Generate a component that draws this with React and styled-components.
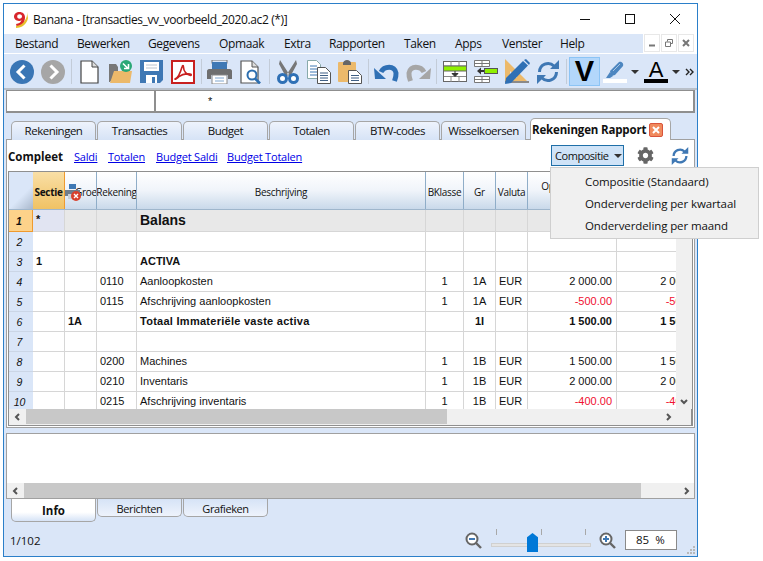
import React from "react";
import styled, { createGlobalStyle } from "styled-components";
import { FaCog } from "react-icons/fa";

const UI_FONT = `"Open Sans", "Noto Sans", sans-serif`;
const CELL_FONT = `"Liberation Sans", Arial, sans-serif`;
const COLUMNS = "24px 32px 32px 40px 289px 38px 32px 32px 89px 91px";

const GlobalStyle = createGlobalStyle`
  html, body {
    margin: 0;
    background: #fff;
    font-family: ${UI_FONT};
    color: #111;
  }
`;

const Page = styled.div`
  width: 763px;
  height: 561px;
  padding: 3px;
  box-sizing: border-box;
  overflow: hidden;
`;

const Window = styled.div`
  position: relative;
  width: 695px;
  height: 554px;
  box-sizing: border-box;
  border: 1px solid #2b7fc9;
  background: #dae6f8;
  display: flex;
  flex-direction: column;
`;

const TitleBar = styled.div`
  height: 30px;
  flex: none;
  background: #fff;
  display: flex;
  align-items: center;
  padding-left: 9px;
  font-size: 12px;
`;

const TitleText = styled.span`
  margin-left: 5px;
  flex: 1;
  letter-spacing: -0.38px;
`;

const WinControls = styled.div`
  display: flex;
  align-items: center;
  margin-right: 17px;
  gap: 35px;
`;

const MenuBar = styled.div`
  height: 20px;
  flex: none;
  display: flex;
  background: #fff;
  box-sizing: border-box;
  border-bottom: 1px solid #fff;
`;

const MenuItems = styled.div`
  width: 639px;
  background: #dae6f8;
  display: flex;
  align-items: center;
  padding-left: 11px;
  box-sizing: border-box;
  font-size: 12px;
  letter-spacing: -0.38px;
`;

const MenuItem = styled.span`
  width: ${(p) => p.$w}px;
  flex: none;
`;

const MdiButtons = styled.div`
  display: flex;
  gap: 1px;
  padding-left: 1px;
`;

const MdiButton = styled.div`
  width: 16px;
  height: 18px;
  border: 1px solid #e8e8e8;
  box-sizing: border-box;
  background: #fff;
  display: flex;
  align-items: center;
  justify-content: center;
`;

const Toolbar = styled.div`
  height: 35px;
  flex: none;
  box-sizing: border-box;
  display: flex;
  align-items: center;
  padding: 0 0 0 2px;
  border-bottom: 2px solid #b9c0c9;
  margin-top: 1px;
`;

const ToolButton = styled.div`
  width: 31px;
  height: 29px;
  flex: none;
  display: flex;
  align-items: center;
  justify-content: center;
`;

const ToolSep = styled.div`
  width: 6px;
  height: 25px;
  flex: none;
  display: flex;
  justify-content: center;
  &::before {
    content: "";
    width: 1px;
    background: #c3ccd8;
  }
`;

const ActiveToolButton = styled(ToolButton)`
  box-sizing: border-box;
  border: 1px solid #8cc4f5;
  background: #b3d7fb;
  font: bold 29px/1 ${CELL_FONT};
  color: #000;
`;

const SplitTool = styled.div`
  width: 41px;
  flex: none;
  display: flex;
  align-items: center;
  padding-left: 3px;
  box-sizing: border-box;
`;

const Caret = styled.span`
  width: 0;
  height: 0;
  margin-left: ${(p) => p.$gap ?? 4}px;
  border-left: 4px solid transparent;
  border-right: 4px solid transparent;
  border-top: 4px solid #333;
`;

const Swatch = styled.div`
  width: 24px;
  display: flex;
  flex-direction: column;
  align-items: center;
  line-height: 1;
`;

const SwatchBar = styled.div`
  width: 24px;
  height: 4px;
  background: ${(p) => p.$color};
`;

const LetterA = styled.span`
  font: 22px/19px ${CELL_FONT};
  color: #000;
`;

const MoreSlot = styled.div`
  margin-left: 3px;
  display: flex;
`;

const FormulaBar = styled.div`
  height: 23px;
  flex: none;
  margin: 0 0 0 2px;
  width: 689px;
  box-sizing: border-box;
  border: 1px solid #8f8f8f;
  border-width: 1px 2px 2px 1px;
  background: #fff;
  display: flex;
  font: 11px/20px ${CELL_FONT};
`;

const FormulaCell = styled.div`
  width: 147px;
  border-right: 2px solid #8f8f8f;
`;

const FormulaValue = styled.div`
  padding-left: 52px;
`;

const TabStrip = styled.div`
  flex: none;
  height: 27px;
  display: flex;
  align-items: flex-end;
  padding-left: 7px;
  gap: 1px;
  position: relative;
  z-index: 2;
  margin-bottom: -1px;
`;

const Tab = styled.div`
  width: 85px;
  height: 19px;
  box-sizing: border-box;
  border: 1px solid #a6a6a6;
  border-bottom: none;
  border-radius: 5px 5px 0 0;
  background: linear-gradient(#eef3fc, #d6e3f6);
  text-align: center;
  font-size: 11.5px;
  letter-spacing: -0.5px;
  line-height: 18px;
`;

const ActiveTab = styled.div`
  width: 141px;
  height: 22px;
  margin-left: 3px;
  box-sizing: border-box;
  border: 1px solid #a6a6a6;
  border-bottom: none;
  border-radius: 5px 5px 0 0;
  background: #fff;
  display: flex;
  align-items: center;
  padding-left: 1px;
  font-size: 11.5px;
  font-weight: 700;
  letter-spacing: -0.16px;
  gap: 3px;
  white-space: nowrap;
`;

const TabClose = styled.span`
  width: 14px;
  height: 14px;
  box-sizing: border-box;
  border: 1px solid #d9543b;
  border-radius: 2px;
  background: #f08a5d;
  color: #fff;
  display: flex;
  align-items: center;
  justify-content: center;
`;

const ReportPanel = styled.div`
  position: relative;
  height: 289px;
  width: 689px;
  flex: none;
  margin-left: 2px;
  box-sizing: border-box;
  border: 1px solid #a0a0a0;
  background: #fff;
  padding: 0 1px 1px;
  display: flex;
  flex-direction: column;
`;

const LinkRow = styled.div`
  height: 31px;
  flex: none;
  display: flex;
  align-items: center;
  font-size: 11px;
  position: relative;
`;

const Current = styled.span`
  font-weight: 700;
  font-size: 11.5px;
  width: 66px;
  padding-top: 1px;
`;

const ReportLink = styled.a`
  color: #0000e6;
  text-decoration: underline;
  width: ${(p) => p.$w}px;
  padding-top: 1px;
  letter-spacing: -0.2px;
`;

const LinkTools = styled.div`
  margin-left: auto;
  display: flex;
  align-items: center;
  padding-right: 4px;
`;

const CompositeButton = styled.div`
  width: 73px;
  height: 21px;
  box-sizing: border-box;
  border: 1px solid #1f6fa8;
  background: #cfe3f7;
  display: flex;
  align-items: center;
  padding-left: 3px;
  font-size: 11px;
  letter-spacing: -0.45px;
  margin-right: 13px;
`;

const GearSlot = styled.div`
  width: 34px;
  display: flex;
  color: #666;
`;

const Menu = styled.div`
  position: absolute;
  left: 543px;
  top: 27px;
  width: 209px;
  height: 72px;
  box-sizing: border-box;
  border: 1px solid #cfcfcf;
  background: #f0f0f0;
  z-index: 5;
  padding-top: 3px;
`;

const MenuOption = styled.div`
  height: 22px;
  padding-left: 34px;
  font-size: 11.5px;
  letter-spacing: -0.1px;
  line-height: 21px;
  white-space: nowrap;
`;

const GridFrame = styled.div`
  flex: 1;
  min-height: 0;
  border: 1px solid #8f8f8f;
  border-right-width: 2px;
  background: #f0f0f0;
  display: flex;
  flex-direction: column;
`;

const GridBody = styled.div`
  display: flex;
  height: 237px;
  flex: none;
`;

const Sheet = styled.div`
  width: 667px;
  overflow: hidden;
  flex: none;
  background: #fff;
`;

const Row = styled.div`
  display: grid;
  grid-template-columns: ${COLUMNS};
  height: ${(p) => p.$h}px;
  width: max-content;
  background: ${(p) => p.$bg || "#fff"};
  font: 11px ${CELL_FONT};
`;

const HeaderRow = styled(Row)`
  background: linear-gradient(#fff, #f0f4fa 50%, #c9d9ea);
  border-bottom: 1px solid #9fb6cc;
  box-sizing: border-box;
`;

const Corner = styled.div`
  background: linear-gradient(135deg, #dae6f8 60%, #a9b8cc);
`;

const HeadCell = styled.div`
  display: flex;
  align-items: ${(p) => (p.$top ? "flex-start" : "center")};
  justify-content: center;
  padding-top: ${(p) => (p.$top ? "7px" : "3px")};
  border-right: 1px solid #8fadc8;
  font: ${(p) => (p.$selected ? "bold" : "normal")} 10px ${UI_FONT};
  letter-spacing: -0.3px;
  white-space: nowrap;
  overflow: hidden;
  box-sizing: border-box;
  background: ${(p) => (p.$selected ? "linear-gradient(#f9dfa6, #f0c264)" : "none")};
  border-color: ${(p) => (p.$selected ? "#ef9a2e" : "#8fadc8")};
`;

const GroupHead = styled(HeadCell)`
  justify-content: flex-start;
`;

const GroupHeadText = styled.span`
  margin-left: -6px;
`;

const RowNumber = styled.div`
  background: ${(p) => (p.$selected ? "#fdd28a" : "#dae6f8")};
  border-right: ${(p) => (p.$selected ? "1px solid #ef9a2e" : "none")};
  border-bottom: 1px solid ${(p) => (p.$selected ? "#ef9a2e" : "#cbd6e6")};
  box-sizing: border-box;
  display: flex;
  align-items: center;
  justify-content: center;
  padding-right: 3px;
  font: italic ${(p) => (p.$selected ? "bold" : "normal")} 10.5px ${CELL_FONT};
`;

const Cell = styled.div`
  border-right: 1px solid #d6d6d6;
  border-bottom: 1px solid #d6d6d6;
  box-sizing: border-box;
  padding: 0 ${(p) => (p.$right ? "4px" : "3px")};
  text-align: ${(p) => (p.$center ? "center" : p.$right ? "right" : "left")};
  font-weight: ${(p) => (p.$bold ? 700 : 400)};
  font-size: ${(p) => (p.$title ? "14px" : "11px")};
  letter-spacing: ${(p) => (p.$wide ? "0.27px" : "0")};
  color: ${(p) => (p.$red ? "#f01030" : "#111")};
  background: ${(p) => p.$bg || "transparent"};
  line-height: ${(p) => (p.$title ? "21px" : "19px")};
  white-space: nowrap;
  overflow: hidden;
`;

const VScroll = styled.div`
  width: 16px;
  flex: none;
  background: #f0f0f0;
  display: flex;
  flex-direction: column;
  justify-content: flex-end;
  align-items: center;
  padding-bottom: 4px;
  box-sizing: border-box;
`;

const HScroll = styled.div`
  height: 15px;
  flex: none;
  width: ${(p) => p.$w};
  background: #f0f0f0;
  display: flex;
  align-items: center;
`;

const ScrollEnd = styled.div`
  width: ${(p) => p.$w}px;
  flex: none;
  display: flex;
  justify-content: center;
`;

const ScrollThumb = styled.div`
  width: ${(p) => p.$w}px;
  flex: none;
  height: 100%;
  background: #c8c8c8;
`;

const ScrollRest = styled.div`
  flex: 1;
`;

const InfoPanel = styled.div`
  margin: 5px 0 0 2px;
  width: 689px;
  height: 66px;
  flex: none;
  box-sizing: border-box;
  border: 1px solid #a0a0a0;
  background: #fff;
  display: flex;
  flex-direction: column;
  justify-content: flex-end;
`;

const BottomTabs = styled.div`
  height: 23px;
  flex: none;
  display: flex;
  align-items: flex-start;
  padding-left: 7px;
  gap: 1px;
`;

const BottomTab = styled.div`
  width: 85px;
  height: 18px;
  box-sizing: border-box;
  border: 1px solid #a6a6a6;
  border-top: none;
  border-radius: 0 0 5px 5px;
  background: linear-gradient(#d6e3f6, #eef3fc);
  text-align: center;
  font-size: 11px;
  letter-spacing: -0.4px;
  line-height: 19px;
`;

const ActiveBottomTab = styled(BottomTab)`
  height: 23px;
  background: linear-gradient(#fff 60%, #d6e3f6);
  font-weight: 700;
  font-size: 11.5px;
  letter-spacing: 0;
  line-height: 23px;
`;

const StatusBar = styled.div`
  flex: 1;
  display: flex;
  align-items: center;
  padding: 2px 0 0 6px;
  font-size: 11.5px;
  position: relative;
`;

const Counter = styled.span`
  flex: 1;
`;

const Slider = styled.div`
  position: relative;
  width: 100px;
  height: 24px;
  margin: 0 8px 0 9px;
`;

const Ticks = styled.div`
  display: flex;
  justify-content: space-between;
  padding: 0 5px;
  height: 6px;
  margin-top: 1px;
`;

const Tick = styled.span`
  width: 1px;
  background: #a8a8a8;
`;

const Track = styled.div`
  height: 2px;
  margin-top: 8px;
  background: #e4e4e4;
  border: 1px solid #d0d0d0;
`;

const Thumb = styled.div`
  position: absolute;
  left: 36px;
  top: 5px;
  width: 11px;
  height: 19px;
  background: #0078d7;
  clip-path: polygon(50% 0, 100% 22%, 100% 100%, 0 100%, 0 22%);
`;

const ZoomValue = styled.div`
  width: 52px;
  height: 20px;
  margin: 0 20px 0 9px;
  box-sizing: border-box;
  border: 1px solid #8a8a8a;
  background: #fff;
  font-size: 11.5px;
  line-height: 18px;
  padding-left: 10px;
  white-space: pre;
`;

const Grip = styled.svg`
  position: absolute;
  right: 2px;
  bottom: 1px;
`;

const FlippableSvg = styled.svg`
  transform: ${(p) => (p.$flip ? "scaleX(-1)" : "none")};
`;

const PrinterSvg = styled.svg`
  position: relative;
  z-index: 1;
  flex: none;
`;

const Logo = () => (
  <svg width="15" height="17" viewBox="0 0 15 17">
    <path d="M3 17c6 0 11-4 12-10l-1-6c1 7-4 12-11 14z" fill="#e8c02c" />
    <path
      d="M6.5 1C3.4 1 1 3 1 5.6S3.2 10 6 10c1 0 2-.3 2.6-1-.6 2.2-2.6 3.6-5.6 3.9l.6 2c5-.4 8.4-3.6 8.4-8.4C12 3.2 9.8 1 6.5 1zm.1 2.3c1.5 0 2.4 1 2.4 2.2S8 7.7 6.5 7.7 4.2 6.8 4.2 5.5s1-2.2 2.4-2.2z"
      fill="#d8262c"
    />
  </svg>
);

const MinimizeIcon = () => (
  <svg width="10" height="10"><path d="M0 5.5h10" stroke="#111" /></svg>
);
const MaximizeIcon = () => (
  <svg width="10" height="10"><rect x=".5" y=".5" width="9" height="9" fill="none" stroke="#111" /></svg>
);
const CloseIcon = () => (
  <svg width="10" height="10"><path d="M0 0l10 10M10 0L0 10" stroke="#111" /></svg>
);

const MdiGlyph = ({ kind }) => (
  <svg width="8" height="8" viewBox="0 0 8 8">
    {kind === "min" && <path d="M1 6.5h6" stroke="#777" strokeWidth="2" />}
    {kind === "restore" && (
      <path d="M2.5 2.5V.5h5v4h-2M.5 3h5v4.5h-5z" fill="none" stroke="#777" />
    )}
    {kind === "close" && <path d="M1 1l6 6M7 1L1 7" stroke="#777" strokeWidth="2" />}
  </svg>
);

const BackIcon = () => (
  <svg width="24" height="24" viewBox="0 0 24 24">
    <circle cx="12" cy="12" r="12" fill="#3a76b5" />
    <path d="M14.5 5.5L8 12l6.5 6.5" fill="none" stroke="#fff" strokeWidth="3" />
  </svg>
);

const ForwardIcon = () => (
  <svg width="24" height="24" viewBox="0 0 24 24">
    <circle cx="12" cy="12" r="12" fill="#a6a6a6" />
    <path d="M9.5 5.5L16 12l-6.5 6.5" fill="none" stroke="#fff" strokeWidth="3" />
  </svg>
);

const NewIcon = () => (
  <svg width="19" height="24" viewBox="0 0 19 24">
    <path d="M1 1h11l6 6v16H1z" fill="#fff" stroke="#444" strokeWidth="1.2" />
    <path d="M12 1v6h6" fill="#ddd" stroke="#444" />
  </svg>
);

const OpenIcon = () => (
  <svg width="25" height="24" viewBox="0 0 25 24">
    <path d="M1 4h7l2 3v5L2 22H1z" fill="#777" />
    <path d="M2 23l4-12h18l-2 12z" fill="#ecb96a" />
    <circle cx="18" cy="6" r="6" fill="#2aa876" />
    <path d="M15 3.5l5 5M16 8.5h4.500V4" fill="none" stroke="#fff" strokeWidth="1.6" />
  </svg>
);

const SaveIcon = () => (
  <svg width="23" height="23" viewBox="0 0 23 23">
    <path d="M0 0h23v20l-3 3H0z" fill="#3f78b4" />
    <rect x="4" y="2" width="15" height="9" fill="#fff" />
    <path d="M6 5h11M6 8h11" stroke="#b8c4d0" />
    <rect x="6" y="15" width="11" height="8" fill="#fff" />
    <rect x="12" y="17" width="3" height="6" fill="#3f78b4" />
  </svg>
);

const PdfIcon = () => (
  <svg width="24" height="24" viewBox="0 0 24 24">
    <rect x="1" y="1" width="22" height="22" fill="#fff" stroke="#c8201f" strokeWidth="2" />
    <path
      d="M4 19c3-1 5-5 7-12 .5-2 1.5-2 1.500 0 0 4 3 8 7 8.500 1 0 1-1.500 0-1.500-4-.5-9 .5-12 3-2 1.500-3.500 3-3.500 2z"
      fill="none"
      stroke="#c8201f"
      strokeWidth="1.6"
    />
  </svg>
);

const PrintIcon = () => (
  <svg width="25" height="24" viewBox="0 0 25 24">
    <rect x="5" y="0" width="15" height="3" fill="none" stroke="#777" />
    <rect x="5" y="2" width="15" height="7" fill="#3f78b4" />
    <path d="M0 11c0-1 1-2 2-2h21c1 0 2 1 2 2v8h-4v-4H4v4H0z" fill="#6f6f6f" />
    <rect x="5" y="15" width="15" height="9" fill="#fff" stroke="#888" />
    <path d="M8 18h9M8 21h9" stroke="#7ea6cf" />
  </svg>
);

const PreviewIcon = () => (
  <svg width="22" height="24" viewBox="0 0 22 24">
    <path d="M1 1h11l6 6v16H1z" fill="#fff" stroke="#555" strokeWidth="1.2" />
    <path d="M12 1v6h6" fill="#ddd" stroke="#555" />
    <circle cx="12" cy="15" r="4.5" fill="#fff" stroke="#2d6fb0" strokeWidth="2" />
    <path d="M15 18.500l5 5" stroke="#2d6fb0" strokeWidth="2.6" />
  </svg>
);

const CutIcon = () => (
  <svg width="22" height="24" viewBox="0 0 22 24">
    <path d="M3 0l9 14-3 3L2 4zM19 0l-9 14 3 3 7-13z" fill="#777" />
    <circle cx="5.5" cy="18.5" r="4" fill="#fff" stroke="#2f70b5" strokeWidth="3" />
    <circle cx="16.5" cy="18.5" r="4" fill="#fff" stroke="#2f70b5" strokeWidth="3" />
  </svg>
);

const CopyIcon = () => (
  <svg width="24" height="24" viewBox="0 0 24 24">
    <path d="M.5.5h9l4 4v14H.5z" fill="#fff" stroke="#8aa" />
    <path d="M3 6h7M3 9h7M3 12h7M3 15h7" stroke="#3f78b4" />
    <path d="M10.5 7.5h8l5 5v11h-13z" fill="#fff" stroke="#555" />
    <path d="M13 13h8M13 15.500h8M13 18h8M13 20.500h8" stroke="#3f5f85" />
  </svg>
);

const PasteIcon = () => (
  <svg width="24" height="24" viewBox="0 0 24 24">
    <rect x="0" y="2" width="18" height="20" rx="1" fill="#ecb96a" />
    <path d="M5 3c0-1.500 2-3 4-3s4 1.500 4 3v2H5z" fill="#666" />
    <path d="M10.5 10.5h8l5 5v8h-13z" fill="#fff" stroke="#555" />
    <path d="M13 15.500h8M13 18h8M13 20.500h8" stroke="#3f5f85" />
  </svg>
);

const UndoIcon = ({ color, flip }) => (
  <FlippableSvg $flip={flip} width="26" height="20" viewBox="0 0 26 20">
    <path d="M7 10C10 4 21 3 22 11c.3 3-.4 5-1.500 8" fill="none" stroke={color} strokeWidth="5" />
    <path d="M0 6l12 11H1z" fill={color} />
  </FlippableSvg>
);

const AddRowIcon = () => (
  <svg width="24" height="21" viewBox="0 0 24 21">
    <rect x=".5" y=".5" width="23" height="20" fill="#fff" stroke="#666" />
    <path d="M1 5h22M1 15.500h22M8 0v5M16 0v5M8 15v6M16 15v6" stroke="#888" />
    <rect x="1" y="5" width="22" height="5" fill="#8ff000" />
    <path d="M1 5h22M1 10h22" stroke="#666" />
    <path d="M12 10v3M9 12.500h6l-3 3z" fill="#333" stroke="#333" />
  </svg>
);

const RemoveRowIcon = () => (
  <svg width="24" height="23" viewBox="0 0 24 23">
    <path d="M.5.5h15v6H.5zM.5 16.500h15v6H.5zM8 .5v6M8 16.500v6M.5 3.500h15M.5 19.500h15" fill="#fff" stroke="#777" />
    <rect x="10.5" y="8.5" width="13" height="5" fill="#8ff000" stroke="#555" />
    <path d="M3 11l4-3.500V10h3v2H7v2.500z" fill="#333" />
  </svg>
);

const RulerIcon = () => (
  <svg width="26" height="25" viewBox="0 0 26 25">
    <path d="M1 0l24 24H1z" fill="#ecb96a" />
    <path d="M6 12l7 7H6z" fill="#dae6f8" />
    <path d="M1 22h24v2H1z" fill="#8a8a8a" />
    <path d="M1 25l1-6L19 2l5 4.500L7 24z" fill="#2f70b5" />
    <path d="M20 1l2-1 4 4-1 2z" fill="#2f70b5" />
  </svg>
);

const RefreshIcon = ({ size = 24 }) => (
  <svg width={size} height={size} viewBox="0 0 24 24">
    <path d="M3.5 12A8.500 8.500 0 0 1 18 6" fill="none" stroke="#3f78b4" strokeWidth="3" />
    <path d="M20.5 12A8.500 8.500 0 0 1 6 18" fill="none" stroke="#3f78b4" strokeWidth="3" />
    <path d="M14 9h9V0zM10 15H1v9z" fill="#3f78b4" />
  </svg>
);

const MarkerIcon = () => (
  <svg width="20" height="18" viewBox="0 0 20 18">
    <path d="M5 10L14 1c2-1 5 1 4 4l-8 9-4 1z" fill="#4d86c0" />
    <path d="M5 11l-4 6h4l3-2z" fill="#4d86c0" />
    <path d="M8 10l7-7" stroke="#a8c6e4" />
  </svg>
);

const MoreIcon = () => (
  <svg width="9" height="8" viewBox="0 0 9 8">
    <path d="M1 1l3 3-3 3M5 1l3 3-3 3" fill="none" stroke="#222" strokeWidth="1.4" />
  </svg>
);

const PrinterErrorIcon = () => (
  <PrinterSvg width="16" height="17" viewBox="0 0 16 17">
    <rect x="4" y="0" width="7" height="5" fill="#3f78b4" />
    <path d="M0 6h15v6h-3v-2H3v2H0z" fill="#6f7d8c" />
    <rect x="3" y="10" width="8" height="5" fill="#c8cfd8" />
    <circle cx="11" cy="12" r="5" fill="#d8402c" />
    <path d="M9 10l4 4M13 10l-4 4" stroke="#fff" strokeWidth="1.4" />
  </PrinterSvg>
);

const ScrollArrow = ({ dir }) => {
  const paths = {
    left: "M5 1L2 4l3 3",
    right: "M3 1l3 3-3 3",
    down: "M1 3l3 3 3-3",
  };
  return (
    <svg width="8" height="8" viewBox="0 0 8 8">
      <path d={paths[dir]} fill="none" stroke="#555" strokeWidth="2" />
    </svg>
  );
};

const ZoomIcon = ({ plus }) => (
  <svg width="17" height="17" viewBox="0 0 17 17">
    <circle cx="7" cy="7" r="5.5" fill="#fff" stroke="#666" strokeWidth="2" />
    <path d="M4 7h6" stroke="#3f78b4" strokeWidth="2" />
    {plus && <path d="M7 4v6" stroke="#3f78b4" strokeWidth="2" />}
    <path d="M11 11l5 5" stroke="#666" strokeWidth="2.4" />
  </svg>
);

const MENU = [
  ["Bestand", 62],
  ["Bewerken", 71],
  ["Gegevens", 71],
  ["Opmaak", 65],
  ["Extra", 45],
  ["Rapporten", 75],
  ["Taken", 51],
  ["Apps", 47],
  ["Venster", 58],
  ["Help", 40],
];

const TABS = ["Rekeningen", "Transacties", "Budget", "Totalen", "BTW-codes", "Wisselkoersen"];

const ROWS = [
  { n: 1, h: 22, title: true, sectie: "*", desc: "Balans" },
  { n: 2 },
  { n: 3, sectie: "1", desc: "ACTIVA", bold: true },
  { n: 4, acc: "0110", desc: "Aanloopkosten", kl: "1", gr: "1A", val: "EUR", a: "2 000.00", b: "2 000.00" },
  { n: 5, acc: "0115", desc: "Afschrijving aanloopkosten", kl: "1", gr: "1A", val: "EUR", a: "-500.00", b: "-500.00", red: true },
  { n: 6, group: "1A", desc: "Totaal Immateriële vaste activa", bold: true, wide: true, gr: "1I", a: "1 500.00", b: "1 500.00" },
  { n: 7 },
  { n: 8, acc: "0200", desc: "Machines", kl: "1", gr: "1B", val: "EUR", a: "1 500.00", b: "1 500.00" },
  { n: 9, acc: "0210", desc: "Inventaris", kl: "1", gr: "1B", val: "EUR", a: "2 000.00", b: "2 000.00" },
  { n: 10, acc: "0215", desc: "Afschrijving inventaris", kl: "1", gr: "1B", val: "EUR", a: "-400.00", b: "-400.00", red: true },
];

const SheetRow = ({ row }) => {
  const first = row.n === 1;
  return (
    <Row $h={row.h || 20} $bg={first ? "#e8e8e8" : "#fff"}>
      <RowNumber $selected={first}>{row.n}</RowNumber>
      <Cell $bold={row.bold || first} $bg={first ? "#e1e4f2" : undefined}>{row.sectie}</Cell>
      <Cell $bold={row.bold}>{row.group}</Cell>
      <Cell>{row.acc}</Cell>
      <Cell $bold={row.bold || first} $title={row.title} $wide={row.wide}>{row.desc}</Cell>
      <Cell $center>{row.kl}</Cell>
      <Cell $center $bold={row.bold}>{row.gr}</Cell>
      <Cell>{row.val}</Cell>
      <Cell $right $bold={row.bold} $red={row.red}>{row.a}</Cell>
      <Cell $right $bold={row.bold} $red={row.red}>{row.b}</Cell>
    </Row>
  );
};

export default function App() {
  return (
    <Page>
      <GlobalStyle />
      <Window>
        <TitleBar>
          <Logo />
          <TitleText>Banana - [transacties_vv_voorbeeld_2020.ac2 (*)]</TitleText>
          <WinControls>
            <MinimizeIcon />
            <MaximizeIcon />
            <CloseIcon />
          </WinControls>
        </TitleBar>

        <MenuBar>
          <MenuItems>
            {MENU.map(([label, w]) => (
              <MenuItem key={label} $w={w}>{label}</MenuItem>
            ))}
          </MenuItems>
          <MdiButtons>
            <MdiButton><MdiGlyph kind="min" /></MdiButton>
            <MdiButton><MdiGlyph kind="restore" /></MdiButton>
            <MdiButton><MdiGlyph kind="close" /></MdiButton>
          </MdiButtons>
        </MenuBar>

        <Toolbar>
          <ToolButton><BackIcon /></ToolButton>
          <ToolButton><ForwardIcon /></ToolButton>
          <ToolSep />
          <ToolButton><NewIcon /></ToolButton>
          <ToolButton><OpenIcon /></ToolButton>
          <ToolButton><SaveIcon /></ToolButton>
          <ToolButton><PdfIcon /></ToolButton>
          <ToolSep />
          <ToolButton><PrintIcon /></ToolButton>
          <ToolButton><PreviewIcon /></ToolButton>
          <ToolSep />
          <ToolButton><CutIcon /></ToolButton>
          <ToolButton><CopyIcon /></ToolButton>
          <ToolButton><PasteIcon /></ToolButton>
          <ToolSep />
          <ToolButton><UndoIcon color="#2f70b5" /></ToolButton>
          <ToolButton><UndoIcon color="#a6a6a6" flip /></ToolButton>
          <ToolSep />
          <ToolButton><AddRowIcon /></ToolButton>
          <ToolButton><RemoveRowIcon /></ToolButton>
          <ToolButton><RulerIcon /></ToolButton>
          <ToolButton><RefreshIcon /></ToolButton>
          <ToolSep />
          <ActiveToolButton>V</ActiveToolButton>
          <SplitTool>
            <Swatch><MarkerIcon /><SwatchBar $color="#fff" /></Swatch>
            <Caret />
          </SplitTool>
          <SplitTool>
            <Swatch><LetterA>A</LetterA><SwatchBar $color="#000" /></Swatch>
            <Caret />
          </SplitTool>
          <MoreSlot><MoreIcon /></MoreSlot>
        </Toolbar>

        <FormulaBar>
          <FormulaCell />
          <FormulaValue>*</FormulaValue>
        </FormulaBar>

        <TabStrip>
          {TABS.map((t) => (
            <Tab key={t}>{t}</Tab>
          ))}
          <ActiveTab>
            Rekeningen Rapport
            <TabClose>
              <svg width="8" height="8"><path d="M1 1l6 6M7 1L1 7" stroke="#fff" strokeWidth="2" /></svg>
            </TabClose>
          </ActiveTab>
        </TabStrip>

        <ReportPanel>
          <LinkRow>
            <Current>Compleet</Current>
            <ReportLink $w={34}>Saldi</ReportLink>
            <ReportLink $w={48}>Totalen</ReportLink>
            <ReportLink $w={71}>Budget Saldi</ReportLink>
            <ReportLink>Budget Totalen</ReportLink>
            <LinkTools>
              <CompositeButton>Compositie<Caret $gap={6} /></CompositeButton>
              <GearSlot><FaCog size={17} /></GearSlot>
              <RefreshIcon size={18} />
            </LinkTools>
          </LinkRow>
          <Menu>
            <MenuOption>Compositie (Standaard)</MenuOption>
            <MenuOption>Onderverdeling per kwartaal</MenuOption>
            <MenuOption>Onderverdeling per maand</MenuOption>
          </Menu>

          <GridFrame>
            <GridBody>
              <Sheet>
                <HeaderRow $h={38}>
                  <Corner />
                  <HeadCell $selected>Sectie</HeadCell>
                  <GroupHead>
                    <PrinterErrorIcon />
                    <GroupHeadText>Groep</GroupHeadText>
                  </GroupHead>
                  <HeadCell>Rekening</HeadCell>
                  <HeadCell>Beschrijving</HeadCell>
                  <HeadCell>BKlasse</HeadCell>
                  <HeadCell>Gr</HeadCell>
                  <HeadCell>Valuta</HeadCell>
                  <HeadCell $top>Opening 2020</HeadCell>
                  <HeadCell $top>Saldo</HeadCell>
                </HeaderRow>
                {ROWS.map((row) => (
                  <SheetRow key={row.n} row={row} />
                ))}
              </Sheet>
              <VScroll><ScrollArrow dir="down" /></VScroll>
            </GridBody>
            <HScroll $w="667px">
              <ScrollEnd $w={17}><ScrollArrow dir="left" /></ScrollEnd>
              <ScrollThumb $w={421} />
              <ScrollRest />
              <ScrollEnd $w={17}><ScrollArrow dir="right" /></ScrollEnd>
            </HScroll>
          </GridFrame>
        </ReportPanel>

        <InfoPanel>
          <HScroll $w="100%">
            <ScrollEnd $w={17}><ScrollArrow dir="left" /></ScrollEnd>
            <ScrollThumb $w={617} />
            <ScrollRest />
            <ScrollEnd $w={17}><ScrollArrow dir="right" /></ScrollEnd>
          </HScroll>
        </InfoPanel>

        <BottomTabs>
          <ActiveBottomTab>Info</ActiveBottomTab>
          <BottomTab>Berichten</BottomTab>
          <BottomTab>Grafieken</BottomTab>
        </BottomTabs>

        <StatusBar>
          <Counter>1/102</Counter>
          <ZoomIcon />
          <Slider>
            <Ticks><Tick /><Tick /><Tick /></Ticks>
            <Track />
            <Thumb />
          </Slider>
          <ZoomIcon plus />
          <ZoomValue>85  %</ZoomValue>
          <Grip width="9" height="9" viewBox="0 0 9 9">
            <path d="M7 0h2v2H7zM4 3h2v2H4zM7 3h2v2H7zM1 6h2v2H1zM4 6h2v2H4zM7 6h2v2H7z" fill="#b8b8b8" />
          </Grip>
        </StatusBar>
      </Window>
    </Page>
  );
}
